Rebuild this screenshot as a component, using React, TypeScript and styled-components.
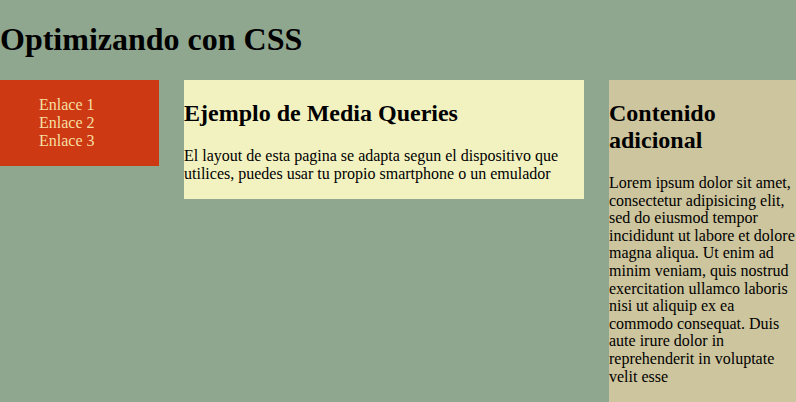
import React from "react";
import styled, { createGlobalStyle } from "styled-components";

const Global = createGlobalStyle`
  html, body { margin: 0; padding: 0; }
  body {
    background: #8fa68f;
    font-family: "Liberation Serif", "Times New Roman", serif;
    font-size: 16px;
    color: #000;
    overflow: hidden;
    width: 796px;
  }
`;

const Title = styled.h1`
  font-size: 32px;
  font-weight: bold;
  margin: 21px 0 22px;
  line-height: 37px;
`;

const Layout = styled.div`
  display: flex;
  align-items: flex-start;
  gap: 25px;
  width: 832px;
`;

const Nav = styled.nav`
  flex: 0 0 159px;
  background: #cd3912;
  display: flow-root;
`;

const LinkList = styled.ul`
  list-style: none;
  margin: 16px 0;
  padding-left: 39px;
  line-height: 18px;
`;

const LinkItem = styled.li`
  color: #f6dfa2;
`;

const Box = styled.section<{ $bg: string; $w: number; $minH?: number }>`
  flex: 0 0 ${(p) => p.$w}px;
  background: ${(p) => p.$bg};
  display: flow-root;
  min-height: ${(p) => p.$minH ?? 0}px;
`;

const Heading = styled.h2`
  font-size: 24px;
  font-weight: bold;
  margin: 20px 0;
  line-height: 27px;
`;

const Para = styled.p<{ $lh?: number }>`
  margin: 16px 0;
  line-height: ${(p) => p.$lh ?? 18}px;
`;

export default function App() {
  return (
    <>
      <Global />
      <Title>Optimizando con CSS</Title>
      <Layout>
        <Nav>
          <LinkList>
            <LinkItem>Enlace 1</LinkItem>
            <LinkItem>Enlace 2</LinkItem>
            <LinkItem>Enlace 3</LinkItem>
          </LinkList>
        </Nav>
        <Box $bg="#f2f2c0" $w={400}>
          <Heading>Ejemplo de Media Queries</Heading>
          <Para>
            El layout de esta pagina se adapta segun el dispositivo que utilices, puedes usar tu propio
            smartphone o un emulador
          </Para>
        </Box>
        <Box $bg="#cdc59e" $w={189} $minH={340}>
          <Heading>Contenido adicional</Heading>
          <Para $lh={17.6}>
            Lorem ipsum dolor sit amet, consectetur adipisicing elit, sed do eiusmod tempor incididunt ut
            labore et dolore magna aliqua. Ut enim ad minim veniam, quis nostrud exercitation ullamco laboris
            nisi ut aliquip ex ea commodo consequat. Duis aute irure dolor in reprehenderit in voluptate velit
            esse
          </Para>
        </Box>
      </Layout>
    </>
  );
}
